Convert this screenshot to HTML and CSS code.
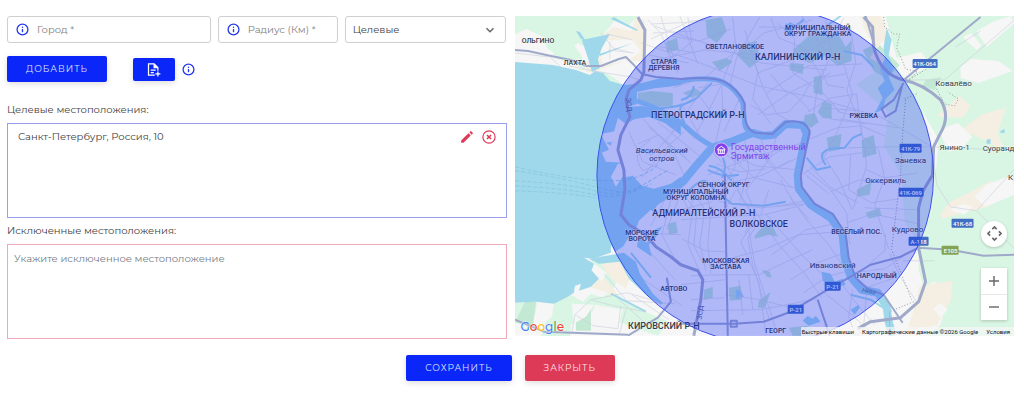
FILE: index.html
```html
<!DOCTYPE html>
<html lang="ru">
<head>
<meta charset="utf-8">
<meta name="viewport" content="width=device-width, initial-scale=1">
<title>Местоположения</title>
<link rel="stylesheet" href="styles.css">
</head>
<body>
<svg class="sprite" aria-hidden="true">
  <symbol id="info" viewBox="0 0 24 24"><circle cx="12" cy="12" r="10" fill="none" stroke="currentColor" stroke-width="2.4"/><path d="M12 11v6" stroke="currentColor" stroke-width="2.4"/><circle cx="12" cy="7.8" r="1.4" fill="currentColor"/></symbol>
</svg>
<form class="page">
  <div class="columns">
    <section class="panel">
      <div class="fields">
        <label class="field"><svg class="info"><use href="#info"/></svg><input type="text" placeholder="Город *" aria-label="Город"></label>
        <label class="field"><svg class="info"><use href="#info"/></svg><input type="text" placeholder="Радиус (Км) *" aria-label="Радиус (Км)"></label>
        <div class="field select-field">
          <select aria-label="Тип местоположения"><option>Целевые</option><option>Исключенные</option></select>
          <svg class="chevron" viewBox="0 0 10 10" aria-hidden="true"><path d="M1.5 3.2 5 6.7l3.500-3.500" fill="none" stroke="currentColor" stroke-width="1.500"/></svg>
        </div>
      </div>
      <div class="actions">
        <button type="button" class="btn">Добавить</button>
        <button type="button" class="btn import" aria-label="Добавить из файла">
          <svg viewBox="0 0 24 24" aria-hidden="true"><g fill="none" stroke="currentColor" stroke-width="2"><path d="M14 21H4V3h9l6 6v5"/><path d="M13 3v6h6" fill="currentColor"/><path d="M7.500 13h8M7.500 17h5M19 15v8M15 19h8"/></g></svg>
        </button>
        <svg class="info" role="img" aria-label="Информация"><use href="#info"/></svg>
      </div>
      <h2 class="caption">Целевые местоположения:</h2>
      <ul class="box target">
        <li class="place">
          <span class="place-name">Санкт-Петербург, Россия, 10</span>
          <button type="button" class="icon-btn" aria-label="Изменить"><svg viewBox="0 0 24 24"><path fill="currentColor" d="M2 18v4h4L18.500 9.500l-4-4zM16 4l4 4 1.600-1.600a1.400 1.400 0 0 0 0-2L19.600 2.400a1.400 1.400 0 0 0-2 0z"/></svg></button>
          <button type="button" class="icon-btn" aria-label="Удалить"><svg viewBox="0 0 24 24"><circle cx="12" cy="12" r="10.500" fill="none" stroke="currentColor" stroke-width="2"/><path d="m8.500 8.500 7 7m0-7-7 7" stroke="currentColor" stroke-width="2.600"/></svg></button>
        </li>
      </ul>
      <h2 class="caption">Исключенные местоположения:</h2>
      <div class="box excluded"><p class="empty">Укажите исключенное местоположение</p></div>
    </section>

    <section class="map" aria-label="Карта">
      <svg class="map-canvas" viewBox="514 16 500 320" preserveAspectRatio="xMidYMid slice">
        <rect class="land" x="514" y="16" width="500" height="320"/>
        <g class="green">
          <path d="M514 16H637L628 25L616 18L602 35L589 50L577 43L559 56L545 48L546 39L526 29L514 34zM549 59l8-11 15-4 9 12 3 14-16-1zM599 70l13 7 8 6-13-1z"/>
          <path d="M885 16H1014V336H924L940 325L951 286L932 282L924 290L918 270L918 248L932 210L938 140L918 104L892 108L878 92L886 68L900 80L930 66L921 52L896 58z"/>
          <path d="M856 84l36-24 30 50 16 80-16 60-18-28-3-46-18-30 5-34-31-26z" opacity=".75"/>
          <path d="M514 303h22l-2 12-20 8zM552 303l18-9 22-36 18-2 10 16-8 18 14 14 42 18-11 14-40-14-25-11-22 14-1 16-29-4z"/>
        </g>
        <g class="park">
          <path d="M514 323l10-21h11l-3 24zM575 315l15-8v24h-15zM705 20l16-3 5 14-10 12-10-7zM741 44l15-3 3 19-10 8-13-13zM793 49l14-12 7-9 12 9 11-4 8 14 6-7v21l-14 5-12-10-16 7-17-7zM789 63l14 1-1 10-13-4zM711 62l15-4 6 4-13 9zM813 77l8-2 1 20-9-2zM817 112l6-11 8 3v15l-9-1zM804 115l10-2 4 9-8 6-7-5zM826 138l15-4-2 16-11 2zM862 50l15-7 22 22-13 14-13-8zM861 140l12-5 3 19-14 4zM856 190l15-8-2 13-12 2zM865 213l14-5 2 8-13 3zM754 236l10-12 8 2 5 11-9-2-14 4zM703 290l9-3v11l-9 2zM728 288l12-2 1 14-12 1zM761 270l8 2 2 6-5-1zM758 301l12-9-6 16h-7zM788 328l18-2 15 10h-29zM667 224l8-2 2 11-9 2zM622 206l12-4 2 16-12 2zM637 93l14-2 21 2v13l-18 1-17-4zM665 42l11-4 2 12-12 2zM925 80l16-3-7 13-12-4zM682 93l12-5 8 5-11 5z"/>
        </g>
        <g class="sand">
          <path d="M590 67l11-32 12-8 18 4 3-13 9 2 3 18-2 24-17-2-24 8-11 2zM584 62l14-1 1 12-14-1zM860 16h20l6 15 4 27-12-6-14-22zM883 40l-14 18 18 9zM936 116l23-20 11 10-8 12zM960 130l22-16 23-6-8 26 8 18-18-10-16-8zM940 215l8-12 24-12 18-10 12 4-14 22-26 6-20 6zM919 286l33-5-2 20-14 25-29 4 5-16zM600 265l18-4 14 9-7 19-13-9zM584 278l17-3 16 20-16 0-18-7z"/>
        </g>
        <g class="block">
          <path d="M522 36l17 3 16 20 14 3 14 7h-38l-31-13zM597 41l34-2 9 12-10 8-28 7zM960 67l10-8 28 2 14 10-34 12-18-5zM962 37l9-4 10 13-5 4zM976 31l18-10 16-5 4 7-28 24zM949 210l14-6 9 3-8 8zM974 197l12-12 26-10 2 20-29 12zM890 276l24 10 4 16-21 18-10-16-7-12zM938 130l19-7 15 14-10 11-14 4zM565 292l14-8 28 9-5 5-12-4-8 8zM577 262l9-3 20 14-5 8zM571 304l22 1-8 12-12 7zM594 305l28 5-5 18-26-12zM537 303h16l-2 14-15 12zM933 309l7-6 7 7-7 8z"/>
        </g>
        <g class="water">
          <path d="M514 62L552 65L575 70L589 75L594 71L602 73L609 81L624 85L641 83L660 78L680 80V85L655 88L636 92L636 104L626 107L641 106L660 111L680 123V135L664 123L648 117L634 119L625 124L617 118L613 132L610 146L618 152L620 162L622 178L632 176L641 186L653 189L670 184L680 177V189L660 201L650 214L640 224L630 234L622 247L614 252L610 245V253L592 259L583 258L593 264L591 270L580 284L574 286L573 293L565 298L553 304L535 302L514 303z"/>
          <path d="M581 40l28-6-8 14-4 11 2 9-8 4-4-14zM580 39l-5-8 4 1 6 9zM613 17l24 13-1 1-26-12zM598 54l34-11-33 13z"/>
          <path d="M588 259l35-6 12 9 4 12 13 20 10 9-2 2-14-9-18-17-9-17-21 2zM636 247l15 10-3-12 18-20-13 5-7 13-8-8zM585 272l-5 12-2 7 12-4 8-8-7-8z"/>
          <path d="M886 28l5 12-3 15 5 13-5 9 6 13-9 9-3 11-8 3 8-15-5-10 7-7-5-12 5-10-1-12zM821 272l9 2 4 8 8-3 3 6-14 4-9-8zM802 321l5-5 5 3 3-3 5 6-12 4zM735 290l5 1 3 6-8 2zM783 30l6-8 8 4-6 7zM850 310l8-5 1 3-5 7zM986 140l4-1v5h-4zM1000 131l4-2v4h-4z"/>
        </g>
        <path class="land" d="M600 134l15-3 3 10-13 2 14 8 3 12-17-1-4-9 7-3zM617 164l8 0 0 8-10 15-5-10zM638 221l12-11 4 4-22 24zM646 232l16-18 3 2-20 24zM656 235l7-10 3 2-9 16z"/>
        <g class="river">
          <path class="neva" d="M646 207L667 194L683 181L696 165L711 148L730 142L752 133L762 136L773 135L785 124L802 125L806 134L802 150L797 175L798 189L810 205L830 218L842 235L844 258L850 277L861 290L877 293L886 307L888 322L892 336"/>
          <path class="branch" d="M636 86Q670 86 685 80Q712 77 722 82Q736 89 742 103L744 124Q745 132 757 134"/>
          <path class="branch" d="M636 101Q666 111 684 126Q697 139 713 147"/>
          <path class="canal" d="M636 108Q678 111 696 98L711 83M680 100q12-2 13-14M684 123q-6-9-4-17l14-7M689 190q9-9 15-9l10 9 17 14 32 2 22-4M707 170q15 8 31 5M722 158q5 10-1 20M708 166q12 1 23 15"/>
          <path class="canal" d="M825 165q-9-12 4-16l15-1 8-10 9-4M806 158l10 12 14-3M785 24q9 6 18-5M824 27l12-8 5-4M843 51l18 4 12 12M850 295l20 5 14 9M630 253l20 25M610 294l35 18"/>
        </g>
        <path class="ferry" d="M514 167Q575 181 608 181T658 164M514 171Q558 177 594 187T637 188L668 170M514 181Q570 184 594 191T641 186M514 186Q570 189 594 195T650 184M514 191Q570 193 594 198"/>
        <g class="minor">
          <path d="M640 43L697 62L758 86L815 98L880 117L930 146M647 20L660 33L673 67M660 16L677 73M679 16L697 64M653 26L704 43L760 63L826 70M650 39L690 21L705 20M648 61L704 50L758 55M672 88L705 77L744 43L759 17M729 86L736 57L763 33L811 20M722 81L735 47L732 17M744 30L757 73L752 99L770 124M747 43L762 87L776 114L794 124M757 73L794 59L833 37L843 18M766 93L807 66L862 64M777 23L794 39L792 73L821 92L840 113M801 16L822 48L844 67L852 95L837 131L824 156M825 20L831 54L817 84L812 122M850 27L855 63L846 91L860 124L866 166L852 210M807 112L830 98L857 94M807 140L836 128L861 126L884 136M757 115L790 92L830 73"/>
          <path d="M670 36L699 41L730 29M687 17L691 42L668 60M650 24l46-2M652 33l41-2M655 46l39 7M648 55l40 8M770 18l8 20 25 10 20 32M758 27l24 0 15 10M750 105l16 10 22-3 14-15 8-15M770 74l12 15 15 8 13 15M829 100l9 12 13 3M821 70l6 15 17 3M820 78l25-4M823 108l34 3M830 119l35 5"/>
          <path d="M650 140Q628 153 642 171Q661 165 670 146M637 144L658 135L685 158M642 119L672 150L683 175M675 129L652 155L637 151M697 88L721 84L706 115L692 139M721 85L722 111L714 146M707 83L682 117L671 132M739 98L723 132M648 127L690 163M657 122L701 158M628 132L642 162L675 175M641 178L662 151L683 132M680 103L701 139M697 94L715 118"/>
          <path d="M707 175L752 157L806 142M708 148L728 170L743 202L755 219L740 242L758 282L765 335M716 147L754 178L794 188M744 141L748 170L739 201M776 136L770 157L745 191L756 215M797 158L760 176L724 184M730 154L755 166L798 170M760 136L765 160L791 188M715 164L739 172L765 169M707 180L694 195L687 215M735 143L734 168L720 190M700 187L719 202L760 208L804 204M680 195L691 216L687 245L698 270M680 220L724 217L763 215L803 205M757 215L778 245L805 275L821 298M765 214L802 256L830 283M789 196L805 219L828 245L845 270M774 207L804 201M736 190L754 216L744 233M748 230L754 264L775 329M760 219L747 239L752 265L769 321M724 260L763 250L798 235L838 232M724 275L758 275L790 260L812 250M724 280L680 285M724 295L760 300L797 310M681 239L704 251L724 252M690 276L724 275M690 300L724 298M690 311L760 310L817 299M738 280L742 315M748 275L752 310M771 255L805 230L834 224M790 280L817 263L846 252M803 293L826 277L848 271M680 210L711 202L724 187"/>
          <path d="M684 196l12 16-3 34 11 20M692 190l12 20-5 34 6 27M703 187l7 23-3 35 3 29M735 190l-9 17M768 190l-8 25M780 180l12 22 16 17M748 148l18 12 12-9M757 150l19 18 14-8M728 150l12 14M766 145l15 7M810 167l19 20 28 16M805 175l22 18M798 177l31-20 32-4M820 152l18 27 13 30"/>
          <path d="M806 170L830 190L846 213L849 245M830 192L859 180L901 184M847 148L885 147L932 147L1000 150M850 155L848 190L871 203L898 199M866 170L884 178L917 173M856 95L861 136L878 150L884 178L874 205L888 249M864 208L918 210M846 223L872 214L918 224M862 270L884 251L885 234M889 254L900 278L916 302M853 273L884 269L901 258M852 290L848 317L855 336M860 290L894 278M902 261L934 261M873 47L884 80M839 119L898 128M932 147L936 185L950 207L976 211L1014 169M976 211L1014 249M903 80L944 80L1014 20M955 47L980 31M820 290l32 26 22 20M840 283l20 26 14 16M866 294l-4 42M871 319l-14 17"/>
          <path d="M600 33L612 48L628 52M606 34L632 40M607 50L633 53M609 42L609 59M568 66L598 72L630 77L641 81M549 57L564 71M514 53L548 57M571 333L574 315L590 300L612 306L644 312M574 315L592 326L617 329L620 306M590 300L626 293L664 304M617 299L644 323M603 274L626 301L674 304M625 310L618 336M631 295L668 320M643 280L681 306M648 251L674 280M642 233L680 235M665 198L650 226M671 196L661 235L677 265M680 193L666 230"/>
        </g>
        <path class="border" d="M883 17l1 10 9 7 6 0-3 14 5 11 4 10 12 3-9 8 18-11M936 89l8 15 10 2 4-7-11-7M904 99l12-5M905 100l-3 35-2 40-9 75 20 50M913 302l-24 10v24"/>
        <g class="roads">
          <path d="M514 50L527 51L550 56L570 60L585 66L600 66L618 59L625 57L632 64L641 74L655 77L680 79Q712 76 724 82Q738 90 744 104Q742 129 755 133L772 134L785 122Q804 119 809 131L805 151L800 175L801 187L814 204L832 214L845 234L848 258L855 278L867 289"/>
          <path class="wide" d="M637 17L644 30L643 72L640 80L628 90L625 100L629 117L620 135L617 150L623 170L624 190L620 215L628 225L645 235L655 247L670 257L680 265L697 271L702 280L700 300L693 336"/>
          <path d="M627 336L657 318L670 302L666 278M514 320L543 332L627 335M680 324L733 324L763 322L790 312L827 290L850 277L870 265L900 257L918 248L950 250L983 256L1014 255"/>
          <path class="wide" d="M863 17L872 27L873 47Q880 75 903 80Q923 84 940 100Q950 116 940 133L933 147L932 175L922 192L918 208L918 248L925 282L918 302L900 318L870 322L857 329"/>
          <path d="M980 17L903 80M724 175L727 336M817 300L829 336M867 289L883 295L902 323M903 83L893 100L881 109L885 117L895 111L902 84M730 321h6v6h-6zM865 16l9 30"/>
        </g>
        <g class="shields">
          <rect class="blue" x="912" y="59" width="25" height="9" rx="1"/><rect class="blue" x="899" y="144" width="22" height="9" rx="1"/><rect class="blue" x="898" y="188" width="25" height="9" rx="1"/><rect class="blue" x="951" y="219" width="22" height="9" rx="1"/><rect class="blue" x="908" y="237" width="20" height="9" rx="1"/><rect class="blue" x="824" y="282" width="16" height="9" rx="1"/><rect class="blue" x="787" y="305" width="16" height="9" rx="1"/><rect class="euro" x="941" y="246" width="17" height="9" rx="1"/>
          <text x="924" y="66">41К-064</text><text x="910" y="151">41К-79</text><text x="910" y="195">41К-069</text><text x="962" y="226">41К-68</text><text x="918" y="244">А-118</text><text x="832" y="289">Р-21</text><text x="795" y="312">Р-21</text><text x="950" y="253">E105</text>
        </g>
        <g class="area">
          <text x="537" y="43">ОЛЬГИНО</text><text x="574" y="65">ЛАХТА</text><text x="663" y="64">СТАРАЯ</text><text x="663" y="70">ДЕРЕВНЯ</text>
          <text x="734" y="49">СВЕТЛАНОВСКОЕ</text><text x="817" y="30">МУНИЦИПАЛЬНЫЙ</text><text x="817" y="36">ОКРУГ ГРАЖДАНКА</text><text x="863" y="118">РЖЕВКА</text>
          <text x="723" y="187">СЕННОЙ ОКРУГ</text><text x="695" y="194">МУНИЦИПАЛЬНЫЙ</text><text x="695" y="200">ОКРУГ КОЛОМНА</text>
          <text x="641" y="235">МОРСКИЕ</text><text x="641" y="241">ВОРОТА</text><text x="725" y="263">МОСКОВСКАЯ</text><text x="725" y="269">ЗАСТАВА</text><text x="673" y="291">АВТОВО</text>
          <text x="856" y="234">ВЕСЁЛЫЙ ПОС.</text><text x="876" y="278">НАРОДНЫЙ</text><text x="775" y="333">ГЕОРГ</text>
        </g>
        <g class="district">
          <text x="797" y="60">КАЛИНИНСКИЙ Р-Н</text><text x="697" y="118">ПЕТРОГРАДСКИЙ Р-Н</text><text x="703" y="216">АДМИРАЛТЕЙСКИЙ Р-Н</text><text x="758" y="227">ВОЛКОВСКОЕ</text><text x="663" y="329">КИРОВСКИЙ Р-Н</text>
        </g>
        <g class="town">
          <text x="953" y="86">Ковалёво</text><text x="954" y="150">Янино-1</text><text x="998" y="151">Суоранд</text><text x="910" y="163">Заневка</text><text x="885" y="183">Оккервиль</text><text x="907" y="232">Кудрово</text><text x="832" y="268">Ивановский</text><text x="1010" y="180">К</text>
          <g class="island"><text x="661" y="153">Васильевский</text><text x="661" y="161">остров</text></g>
        </g>
        <text class="road-name" transform="translate(625 98) rotate(85)">ЗСД</text>
        <text class="road-name" transform="translate(701 320) rotate(-85)">ЗСД</text>
        <text class="river-name" transform="translate(861 292) rotate(12)">Нева</text>
        <circle class="radius" cx="764.500" cy="175.500" r="168.500"/>
        <g class="poi">
          <circle cx="720.500" cy="150" r="7"/>
          <path class="museum" d="m717 149 3.500-2.500 3.500 2.500v1h-7zM717.500 150v3M719.500 150v3M721.500 150v3M723.500 150v3M717 153.500h7"/>
          <text x="730" y="150">Государственный</text><text x="730" y="159">Эрмитаж</text>
        </g>
      </svg>
      <a class="logo" href="#maps" aria-label="Google"><span class="c-blue">G</span><span class="c-red">o</span><span class="c-yellow">o</span><span class="c-blue">g</span><span class="c-green">l</span><span class="c-red">e</span></a>
      <div class="controls">
        <button type="button" class="pan" aria-label="Управление камерой"><svg viewBox="0 0 24 24"><path fill="none" stroke="currentColor" stroke-width="2.600" d="m8.500 5 3.500-3.500L15.500 5M19 8.500l3.500 3.500-3.500 3.500M15.500 19 12 22.500 8.500 19M5 15.500 1.500 12 5 8.500"/></svg></button>
        <div class="zoom">
          <button type="button" aria-label="Увеличить"><svg viewBox="0 0 12 12"><path stroke="currentColor" stroke-width="1.400" d="M6 1v10M1 6h10"/></svg></button>
          <button type="button" aria-label="Уменьшить"><svg viewBox="0 0 12 12"><path stroke="currentColor" stroke-width="1.400" d="M1 6h10"/></svg></button>
        </div>
      </div>
      <div class="credits"><button type="button">Быстрые клавиши</button><span>Картографические данные ©2026 Google</span><a href="#terms">Условия</a></div>
    </section>
  </div>
  <footer class="footer">
    <button type="button" class="btn">Сохранить</button>
    <button type="button" class="btn danger">Закрыть</button>
  </footer>
</form>
</body>
</html>
```

FILE: styles.css
```css
* { box-sizing: border-box; }
body { margin: 0; background: #fff; color: #404040; font-family: "Montserrat", "Open Sans", sans-serif; font-size: 10px; line-height: 16px; }
button, input, select { font: inherit; color: inherit; }
button { border: 0; padding: 0; cursor: pointer; }
svg { display: block; }
.sprite { position: absolute; width: 0; height: 0; }

.page { padding: 16px 10px 16px 7px; }
.columns { display: grid; grid-template-columns: 1fr 1fr; gap: 8px; align-items: start; }

.fields { display: grid; grid-template-columns: 204fr 120fr 162fr; gap: 7px; }
.field { display: flex; align-items: center; gap: 8px; height: 27px; padding: 0 8px; border: 1px solid #cfcfcf; border-radius: 3px; min-width: 0; }
.field input { flex: 1; min-width: 0; width: 100%; padding: 0; border: 0; outline: 0; background: none; }
.field input::placeholder { color: #808080; opacity: 1; }
.info { flex: none; width: 13px; height: 13px; color: #2438ee; }
.select-field { position: relative; padding: 0; }
.select-field select { appearance: none; width: 100%; height: 100%; padding: 0 24px 0 7px; border: 0; background: none; }
.chevron { position: absolute; right: 10px; top: 8px; width: 10px; height: 10px; color: #666; pointer-events: none; }

.actions { display: flex; align-items: center; height: 26px; margin: 13px 0 20px; }
.btn { height: 26px; padding: 0 19px; border-radius: 2px; background: #0b26f8; color: #dde1ff; font-size: 9px; letter-spacing: 1px; text-transform: uppercase; box-shadow: 0 2px 6px #0002; }
.btn.import { display: grid; place-items: center; width: 42px; height: 23px; margin: 0 7px 0 26px; padding: 0; color: #fff; }
.import svg { width: 15px; height: 15px; }
.btn.danger { background: #dd3a58; color: #ffe0e6; }

.caption { margin: 0 0 5px; font-size: 10px; font-weight: 400; line-height: 16px; }
.box { height: 95px; margin: 0 0 5px; border: 1px solid #9a9fee; }
.box.excluded { margin: 0; padding: 6px; border-color: #efa9b6; }
.target { padding: 5px 10px; list-style: none; }
.place { display: flex; align-items: center; gap: 8px; }
.place-name { flex: 1; }
.icon-btn { width: 14px; height: 14px; background: none; color: #dd3a58; }
.icon-btn svg { width: 14px; height: 14px; }
.empty { margin: 0; color: #747c86; }

.footer { display: flex; justify-content: center; gap: 13px; margin-top: 16px; }

.map { position: relative; overflow: hidden; aspect-ratio: 500 / 320; font-family: Roboto, sans-serif; }
.map-canvas { width: 100%; height: 100%; }
.land { fill: #f6f6f6; }
.green { fill: #d9f5e3; }
.park { fill: #c3e8d3; }
.sand { fill: #f5efe3; }
.block { fill: #f6f6f6; }
.water { fill: #a0d8eb; }
.river path { fill: none; stroke: #a0d8eb; stroke-linejoin: round; }
.river .neva { stroke-width: 8px; }
.river .branch { stroke-width: 5px; }
.river .canal { stroke-width: 2px; }
.ferry { fill: none; stroke: #7fc3dc; stroke-width: 1px; stroke-dasharray: 4 2; opacity: .7; }
.minor { fill: none; stroke: #cbd0de; stroke-width: 1px; opacity: .6; }
.border { fill: none; stroke: #999; stroke-width: 1px; stroke-dasharray: 1 2; }
.roads { fill: none; stroke: #9fa9ca; stroke-width: 2px; stroke-linejoin: round; }
.roads .wide { stroke-width: 3px; }
.shields text { fill: #fff; font-size: 6px; font-weight: 500; text-anchor: middle; }
.shields .blue { fill: #426fc4; }
.shields .euro { fill: #83a455; }
.area, .district, .town { text-anchor: middle; paint-order: stroke; stroke: #fff8; stroke-width: 1px; fill: #333b45; }
.area { font-size: 7px; font-weight: 500; }
.district { font-size: 9px; font-weight: 500; }
.town { font-size: 8px; }
.island { font-size: 8px; font-style: italic; }
.road-name { font-size: 7px; fill: #5d6696; }
.river-name { font-size: 6px; font-style: italic; fill: #397d9b; }
.radius { fill: rgb(8, 35, 250); fill-opacity: .29; stroke: #3b50ec; stroke-width: 1px; }
.poi { fill: #8142eb; font-size: 9px; }
.poi circle { stroke: #cfbdff; stroke-width: 1px; }
.poi .museum { fill: none; stroke: #fff; stroke-width: 1px; }

.logo { position: absolute; left: 6px; bottom: 0; font: 500 12px/18px "Montserrat", "Open Sans", sans-serif; text-decoration: none; text-shadow: 0 0 1px #fff, 0 0 2px #fff; }
.c-blue { color: #4285f4; }
.c-red { color: #ea4335; }
.c-yellow { color: #fbbc04; }
.c-green { color: #34a853; }
.controls { position: absolute; right: 7px; bottom: 16px; display: grid; justify-items: center; gap: 21px; color: #666; }
.pan { display: grid; place-items: center; width: 26px; height: 26px; border-radius: 50%; background: #fff; box-shadow: 0 1px 3px #0003; }
.pan svg { width: 15px; height: 15px; }
.zoom { display: grid; background: #fff; box-shadow: 0 1px 3px #0003; }
.zoom button { display: grid; place-items: center; width: 26px; height: 26px; background: none; }
.zoom button + button { border-top: 1px solid #e8e8e8; }
.zoom svg { width: 12px; height: 12px; }
.credits { position: absolute; right: 0; bottom: 0; display: flex; font-size: 6px; line-height: 9px; color: #111; white-space: nowrap; }
.credits > * { padding: 0 4px; background: #f5f5f5bb; color: inherit; text-decoration: none; }
.credits > :first-child { padding-left: 1px; }
```
